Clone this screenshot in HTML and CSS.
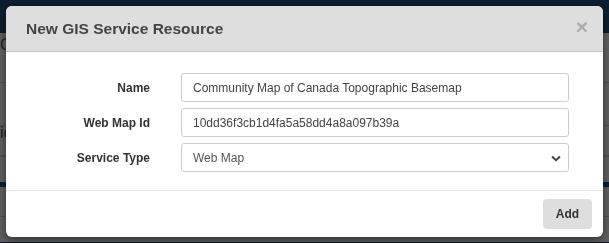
FILE: index.html
```html
<!DOCTYPE html>
<html lang="en">
<head>
  <meta charset="UTF-8" />
  <title>New GIS Service Resource</title>
  <link rel="stylesheet" href="styles.css">
</head>
<body>

  <!-- page behind the dialog -->
  <div class="page">
    <div class="topbar"></div>
    <div class="page-row row-a"><span class="crumb">G</span></div>
    <div class="page-row row-b"></div>
    <div class="page-row row-c"><span class="crumb">ic</span></div>
    <div class="page-row row-d"></div>
    <div class="page-strip"></div>
    <div class="page-row row-e"></div>
    <div class="page-strip"></div>
  </div>

  <div class="backdrop"></div>

  <div class="modal">
    <div class="modal-header">
      <h4 class="modal-title">New GIS Service Resource</h4>
      <button class="close" type="button">&times;</button>
    </div>

    <form class="modal-body">
      <div class="form-row">
        <label for="name">Name</label>
        <input type="text" id="name" value="Community Map of Canada Topographic Basemap" />
      </div>
      <div class="form-row">
        <label for="mapId">Web Map Id</label>
        <input type="text" id="mapId" value="10dd36f3cb1d4fa5a58dd4a8a097b39a" />
      </div>
      <div class="form-row">
        <label for="serviceType">Service Type</label>
        <div class="select-wrap">
          <select id="serviceType">
            <option>Web Map</option>
            <option>Feature Service</option>
            <option>Map Service</option>
          </select>
          <svg class="caret" width="10" height="7" viewBox="0 0 10 7">
            <path d="M1 1.5 L5 5.2 L9 1.5" fill="none" stroke="#444" stroke-width="2" />
          </svg>
        </div>
      </div>
    </form>

    <div class="modal-footer">
      <button class="btn" type="button">Add</button>
    </div>
  </div>

</body>
</html>
```

FILE: styles.css
```css
body {
  margin: 0;
  font-family: 'Liberation Sans', Arial, sans-serif;
  font-size: 12px;
  color: #333;
  background: #fff;
  overflow: hidden;
}

/* page behind */
.page {
  height: 243px;
  background: #ececec;
}

.topbar {
  height: 33px;
  background: #1d4a75;
}

.page-row {
  border-bottom: 1px solid #c4c4c4;
}

.crumb {
  font-size: 16px;
  color: #555;
}

.row-a {
  height: 49px;
  line-height: 24px;
}

.row-b {
  height: 42px;
}

.row-c {
  height: 29px;
  line-height: 14px;
}

.row-d {
  height: 0;
}

.page-strip {
  height: 5px;
  margin-top: 25px;
  background: #1d4a75;
}

.row-e {
  height: 29px;
}

.backdrop {
  position: fixed;
  inset: 0;
  background: rgba(0, 0, 0, 0.6);
}

/* dialog */
.modal {
  position: fixed;
  top: 6px;
  left: 6px;
  width: 597px;
  height: 231px;
  background: #fff;
  border-radius: 6px;
  box-shadow: 0 3px 9px rgba(0, 0, 0, 0.5);
  display: flex;
  flex-direction: column;
  overflow: hidden;
}

.modal-header {
  height: 45px;
  background: #dedede;
  border-bottom: 1px solid #c8c8c8;
  display: flex;
  align-items: center;
  justify-content: space-between;
  padding: 0 15px 0 20px;
}

.modal-title {
  margin: 0;
  font-size: 15.5px;
  font-weight: bold;
  color: #444;
}

.close {
  background: none;
  border: none;
  padding: 0;
  font-family: 'Liberation Sans', Arial, sans-serif;
  font-size: 21px;
  font-weight: bold;
  line-height: 1;
  color: #aaa;
  margin-top: -4px;
}

.modal-body {
  margin: 0;
  padding: 21px 34px 18px 0;
  display: flex;
  flex-direction: column;
  gap: 6px;
  border-bottom: 1px solid #e5e5e5;
}

.form-row {
  display: flex;
  align-items: center;
}

.form-row label {
  width: 144px;
  padding-right: 31px;
  text-align: right;
  font-weight: bold;
  color: #333;
}

.form-row input,
.form-row select {
  box-sizing: border-box;
  width: 388px;
  height: 29px;
  padding: 0 11px;
  border: 1px solid #ccc;
  border-radius: 3px;
  font-family: 'Liberation Sans', Arial, sans-serif;
  font-size: 12px;
  color: #444;
  background: #fff;
}

.select-wrap {
  position: relative;
}

.form-row select {
  appearance: none;
  -webkit-appearance: none;
  color: #555;
}

.caret {
  position: absolute;
  right: 8px;
  top: 12px;
  pointer-events: none;
}

.modal-footer {
  flex: 1;
  display: flex;
  align-items: center;
  justify-content: flex-end;
  padding: 0 11px 0 0;
}

.btn {
  width: 49px;
  height: 30px;
  border: none;
  border-radius: 4px;
  background: #dedede;
  font-family: 'Liberation Sans', Arial, sans-serif;
  font-size: 12px;
  font-weight: bold;
  color: #333;
}
```
